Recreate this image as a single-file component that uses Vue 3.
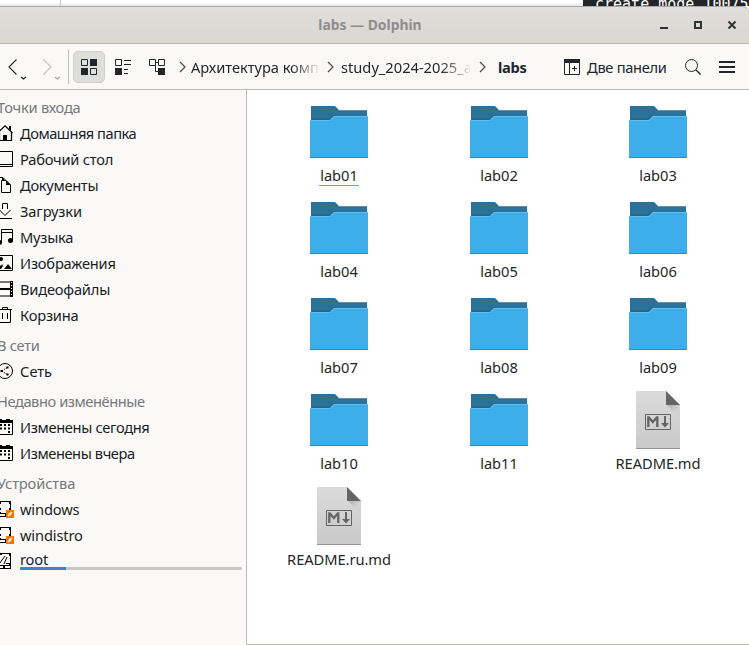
<script setup>
const places = [
  { title: 'Точки входа', ls: -0.25, items: [
    { icon: 'home', label: 'Домашняя папка', ls: -0.5 },
    { icon: 'desktop', label: 'Рабочий стол', ls: -0.22 },
    { icon: 'docs', label: 'Документы', ls: -0.3 },
    { icon: 'down', label: 'Загрузки', ls: -0.13 },
    { icon: 'music', label: 'Музыка', ls: -0.25 },
    { icon: 'image', label: 'Изображения', ls: -0.2 },
    { icon: 'video', label: 'Видеофайлы', ls: -0.2 },
    { icon: 'trash', label: 'Корзина', ls: -0.2 },
  ] },
  { title: 'В сети', ls: -0.3, items: [{ icon: 'net', label: 'Сеть', ls: 0 }] },
  { title: 'Недавно изменённые', ls: -0.44, items: [
    { icon: 'cal', label: 'Изменены сегодня', ls: -0.34 },
    { icon: 'cal', label: 'Изменены вчера', ls: -0.42 },
  ] },
  { title: 'Устройства', ls: -0.12, items: [
    { icon: 'disk', label: 'windows', ls: -0.15 },
    { icon: 'disk', label: 'windistro', ls: -0.15 },
    { icon: 'root', label: 'root', ls: -0.2, usage: 20.7 },
  ] },
]
const files = [
  ...Array.from({ length: 11 }, (_, i) => ({ name: 'lab' + String(i + 1).padStart(2, '0'), dir: true })),
  { name: 'README.md' },
  { name: 'README.ru.md' },
]
</script>

<template>
  <div class="screen">
    <div class="behind">
      <div class="behind-light"><i></i></div>
      <div class="terminal"><span>create mode 10075</span></div>
    </div>
    <header class="titlebar">
      <span class="title">labs — Dolphin</span>
      <svg class="winbtns" width="84" height="16" viewBox="0 0 84 16">
        <path d="M3 10h8v2H3z" fill="#2e3436" />
        <path d="M38 5h6v6h-6z" fill="none" stroke="#2e3436" stroke-width="2" />
        <path d="M71.500 4.500l7 7M78.500 4.500l-7 7" stroke="#2e3436" stroke-width="2" />
      </svg>
    </header>
    <nav class="toolbar">
      <svg class="history" width="68" height="34" viewBox="0 0 68 34">
        <g fill="none">
          <path d="M16.500 9.500L9 17l7.500 7.500" stroke="#232629" stroke-width="1.100" />
          <path d="M21 27l2.500 2 2.500-2" stroke="#232629" stroke-width="1.300" />
          <path d="M43.500 9.500L51 17l-7.500 7.500" stroke="#c4c4c3" stroke-width="1.100" />
          <path d="M55 27l2.500 2 2.500-2" stroke="#a4a5a5" stroke-width="1.300" />
        </g>
      </svg>
      <div class="sep"></div>
      <div class="mode on">
        <svg width="16" height="16" viewBox="0 0 16 16">
          <path d="M9 0h7v7H9zM0 9h7v7H0z" fill="#232629" />
          <path d="M.5.5h6v6h-6zM9.500 9.500h6v6h-6z" fill="none" stroke="#232629" />
        </svg>
      </div>
      <div class="mode">
        <svg width="16" height="16" viewBox="0 0 16 16">
          <path d="M0 9h7v7H0z" fill="#232629" />
          <path d="M.5.5h6v6h-6zM9 1.500h7M9 5.500h7M9 10.500h4M9 14.500h4" fill="none" stroke="#232629" />
        </svg>
      </div>
      <div class="mode">
        <svg width="16" height="16" viewBox="0 0 16 16">
          <path d="M9 9h7v7H9z" fill="#232629" />
          <path d="M.5.5h6v6h-6zM9.500.5h6v6h-6zM7 3.500h2.500M6.500 3.500v9H9" fill="none" stroke="#232629" />
        </svg>
      </div>
      <div class="crumbs">
        <svg class="chev" width="8" height="12" viewBox="0 0 8 12"><path d="M1 1l5 5-5 5" /></svg>
        <span class="crumb c1">Архитектура комп</span>
        <svg class="chev" width="8" height="12" viewBox="0 0 8 12"><path d="M1 1l5 5-5 5" /></svg>
        <span class="crumb c2">study_2024-2025_a</span>
        <svg class="chev" width="8" height="12" viewBox="0 0 8 12"><path d="M1 1l5 5-5 5" /></svg>
        <span class="crumb c3">labs</span>
      </div>
      <div class="split">
        <svg width="16" height="16" viewBox="0 0 16 16">
          <path d="M0 0h16v4H0z" fill="#232629" />
          <path d="M.5.500h15v15H.5zM5.500 4v12M8 9.500h5M10.500 7v5" fill="none" stroke="#232629" />
        </svg>
        <span>Две панели</span>
      </div>
      <svg class="search" width="16" height="16" viewBox="0 0 16 16">
        <g fill="none" stroke="#232629"><circle cx="6.500" cy="6.500" r="6" /><path d="M10.800 10.800l4.800 4.800" stroke-width="1.300" /></g>
      </svg>
      <svg class="burger" width="16" height="12" viewBox="0 0 16 12"><path d="M0 0h16v2H0zM0 5h16v2H0zM0 10h16v2H0z" fill="#232629" /></svg>
    </nav>
    <main class="body">
      <aside class="places">
        <section v-for="g in places" :key="g.title">
          <h2 :style="{ letterSpacing: g.ls + 'px' }">{{ g.title }}</h2>
          <div v-for="p in g.items" :key="p.label" class="place" :class="{ used: p.usage }">
            <svg width="14" height="17" viewBox="0 0 14 17" fill="none" stroke="#000">
              <template v-if="p.icon === 'home'">
                <path d="M-3 8.500L5 .8l7.500 7.200M-.5 7v8.500h12V7" stroke-width="1.200" />
                <path d="M9 1h2v5L9 4zM3 10h4v6H3z" fill="#000" stroke="none" />
              </template>
              <path v-else-if="p.icon === 'desktop'" d="M-2.500.5h15v15h-15zM-2 13.500h14" />
              <template v-else-if="p.icon === 'docs'">
                <path d="M1.500 15.500v-12H6l4.500 4.500v7.500zM0 12.500h-2V.500h5l2 2" />
                <path d="M6 3v5h5zM2 0v3h3z" fill="#000" stroke="none" />
              </template>
              <path v-else-if="p.icon === 'down'" d="M2.500 6V.500h5V6M-.5 7L5 12.500 10.500 7M-3 15.500h15" />
              <template v-else-if="p.icon === 'music'">
                <path d="M1.500 14V.500h11V11M2 3.500h10" />
                <circle cx="10.500" cy="11.500" r="2.500" fill="#000" stroke="none" />
                <circle cx="-.5" cy="13.500" r="2.500" fill="#000" stroke="none" />
              </template>
              <template v-else-if="p.icon === 'image'">
                <path d="M-2.500.5h15v15h-15z" />
                <path d="M4 14l4-5 4 5zM-2 9l3 2 1-2 1 2-2 3h-3z" fill="#000" stroke="none" />
                <circle cx="1" cy="4" r="2" fill="#000" stroke="none" />
              </template>
              <template v-else-if="p.icon === 'video'">
                <path d="M0 1h10M0 15h10" stroke="#777" stroke-width="2" />
                <path d="M0 8h10" stroke-width="2" />
                <path d="M10 0h3v16h-3z" fill="#000" stroke="none" />
                <path d="M11.500 1v15" stroke="#faf9f8" stroke-dasharray="1 2" />
              </template>
              <path v-else-if="p.icon === 'trash'" d="M-2 2.500h14M2.500 2V.500h5V2M-.5 3v12.500h11V3M2.500 6v6M7.500 6v6" />
              <template v-else-if="p.icon === 'net'">
                <circle cx="5" cy="8" r="7.500" />
                <path d="M7.500 4.500L1.500 8l6 3.500" stroke-dasharray="1.500 1" />
                <path d="M6.500 3.500h2v2h-2zM.5 7h2v2h-2zM6.500 10.500h2v2h-2z" fill="#000" stroke="none" />
              </template>
              <template v-else-if="p.icon === 'cal'">
                <path d="M-2.500 2.500h15v13h-15z" />
                <path d="M-3 1h2V0h3v1h4V0h4v1h3v3H-3zM0 5h2v2H0zM4 5h2v2H4zM8 5h2v2H8zM0 8.500h2v2H0zM4 8.500h2v2H4zM8 8.500h2v2H8zM8 12h2v2H8z" fill="#000" stroke="none" />
              </template>
              <template v-else-if="p.icon === 'disk'">
                <path d="M-1 .5h11M10.500 0v9M0 15.500h5M0 12.500h5" />
                <path d="M9 1h1v2H9zM9 7h1v2H9zM0 1h1v2H0zM0 7h1v2H0zM0 11h1v2H0zM5 12h1v4H5z" fill="#000" stroke="none" />
                <path d="M6 9h8v8H6z" fill="#f67400" stroke="none" />
                <path d="M8 15l4-4M9 12l2 2" stroke="#fff" stroke-width="1.400" />
              </template>
              <template v-else>
                <path d="M0 .5h10M10.500 0v16M0 12.500h10M0 15.500h10M-1 11L5 3M4 11l3-7M6 10.500h3" />
                <path d="M9 1h1v2H9zM0 1h2v1H0zM3 13h2v3H3zM9 10h2v3H9z" fill="#000" stroke="none" />
              </template>
            </svg>
            <span :style="{ letterSpacing: p.ls + 'px' }">{{ p.label }}</span>
            <div v-if="p.usage" class="bar"><div :style="{ width: p.usage + '%' }"></div></div>
          </div>
        </section>
      </aside>
      <div class="view">
        <div v-for="(f, i) in files" :key="f.name" class="file">
          <svg v-if="f.dir" width="64" height="64" viewBox="0 0 64 64">
            <path d="M4 6h24l4 4h28v20H4z" fill="#2a7297" />
            <path d="M32 10h28v1H31z" fill="#5e93ae" />
            <path d="M3 20h20l4-4h34v42H3z" fill="#3daee9" />
            <path d="M3 20h20l4-4h34v1H27.500l-4 4H3z" fill="#62bded" />
            <path d="M4 19h18.500l4-4" fill="none" stroke="#235f7e" />
            <path d="M3 57h58v1H3z" fill="#308bba" />
          </svg>
          <svg v-else width="64" height="64" viewBox="0 0 64 64">
            <defs>
              <linearGradient :id="'p' + i" x1="0" y1="1" x2="0" y2="0"><stop stop-color="#c9c9c9" /><stop offset="1" stop-color="#dbdbdb" /></linearGradient>
              <linearGradient :id="'s' + i" x1="0" y1="0" x2="1" y2="1"><stop stop-color="#a9a9a9" /><stop offset=".6" stop-color="#d2d2d2" /></linearGradient>
            </defs>
            <path d="M10 3h30l14 14v44H10z" :fill="`url(#p${i})`" />
            <path d="M40 16h14v14z" :fill="`url(#s${i})`" />
            <path d="M40 3l14 14H40z" fill="#656565" />
            <path d="M10 60h44v1H10z" fill="#959595" />
            <path d="M19.500 26.500h25v15h-25z" fill="none" stroke="#656565" />
            <path d="M22.300 39V29.500h.5l4 4.500 4-4.500h.5V39" fill="none" stroke="#656565" stroke-width="2.300" />
            <path d="M38 28h2v7h3l-4 4.500-4-4.500h3z" fill="#656565" />
          </svg>
          <span :class="{ current: i === 0 }">{{ f.name }}</span>
        </div>
      </div>
    </main>
  </div>
</template>

<style>
body { margin: 0; overflow: hidden; }
</style>
<style scoped>
* { box-sizing: border-box; }
svg { display: block; flex: none; }
.screen { width: 749px; height: 645px; display: flex; flex-direction: column; background: #faf9f8; overflow: hidden; font: 14.667px/20px "Noto Sans", sans-serif; color: #232629; white-space: nowrap; }
.behind { height: 6px; display: flex; flex: none; background: #fff; }
.behind-light { width: 583px; background: linear-gradient(#fff 40%, #e4e4e4); padding-left: 60px; }
.behind-light i { display: block; width: 1px; height: 6px; background: #c3ccd5; }
.terminal { flex: 1; background: #232629; color: #fcfcfc; overflow: hidden; padding-left: 12px; font: 15px/18px "DejaVu Sans Mono", monospace; }
.terminal span { display: block; margin-top: -5px; }
.titlebar { height: 38px; flex: none; display: grid; grid-template-columns: 84px 1fr 84px; align-items: center; padding-right: 8px; border-top: 1px solid #aaa9a8; border-bottom: 1px solid #bfb8b1; background: linear-gradient(#e1dedb, #dad6d2); border-radius: 0 7px 0 0; }
.title { grid-column: 2; text-align: center; font-weight: 700; font-size: 13.9px; color: #8f8e8d; padding-right: 1px; }
.toolbar { height: 46px; flex: none; display: flex; align-items: center; border-bottom: 1px solid #bcbbba; padding-right: 14px; }
.sep { width: 1px; height: 34px; background: #bcbdbd; margin-right: 4px; }
.mode { width: 32px; height: 32px; display: grid; place-items: center; margin-right: 2px; border-radius: 5px; }
.on { background: #dededd; border: 1px solid #cfcfce; }
.crumbs { display: flex; align-items: center; margin-left: 4px; width: 385px; }
.chev { margin: 0 4px 0 0; }
.chev path { fill: none; stroke: #4d5052; stroke-width: 1.300; }
.crumb { overflow: hidden; }
.c1 { width: 128px; margin-right: 8px; letter-spacing: -0.05px; mask-image: linear-gradient(90deg, #000 100px, transparent 130px); }
.c2 { width: 129px; margin-right: 9px; margin-left: 2px; mask-image: linear-gradient(90deg, #000 100px, transparent 131px); }
.c3 { font-weight: 700; margin-left: 7px; letter-spacing: -0.3px; }
.split { display: flex; align-items: center; gap: 7px; width: 121px; letter-spacing: -0.3px; }
.search { margin-right: 18px; }
.body { flex: 1; min-height: 0; display: flex; }
.places { width: 246px; flex: none; padding-top: 5px; display: flex; flex-direction: column; gap: 4px; overflow: hidden; }
h2 { margin: 0 0 0 -3px; font: inherit; line-height: 24px; height: 26px; color: #777879; }
.place { height: 26px; display: grid; grid-template-columns: 14px 222px; column-gap: 6px; padding-top: 4px; align-content: start; line-height: 16px; color: #1b1d1f; }
.place svg { grid-row: 1 / 3; }
.used { grid-template-rows: 14px 3px; line-height: 12px; }
.bar { grid-column: 2; height: 3px; background: #c8c7c6; border-radius: 1px; overflow: hidden; }
.bar div { height: 3px; background: #3584e4; }
.view { flex: 1; background: #fff; border-left: 1px solid #bcbbba; border-bottom: 1px solid #bcbbba; padding: 10px 0 0 12px; display: grid; grid-template-columns: 160px 160px 158px; grid-auto-rows: 96px; align-content: start; }
.file { display: flex; flex-direction: column; align-items: center; }
.file span { margin-top: 1px; line-height: 20px; letter-spacing: -0.05px; }
.current { border-bottom: 1px solid #3daee9; padding: 0 1.500px; }
</style>
